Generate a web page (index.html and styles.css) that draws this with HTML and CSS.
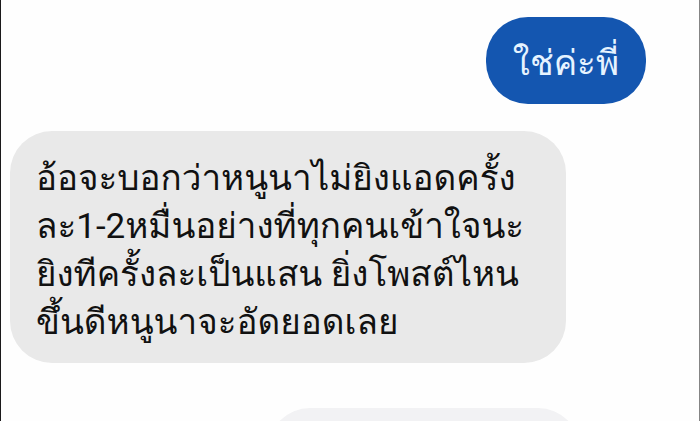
FILE: index.html
```html
<!DOCTYPE html>
<html lang="th">
<head>
<meta charset="utf-8">
<meta name="viewport" content="width=device-width, initial-scale=1">
<title>แชท</title>
<link rel="stylesheet" href="styles.css">
</head>
<body>
<main class="chat">
<p class="bubble sent">ใช่ค่ะพี่</p>
<p class="bubble received">อ้อจะบอกว่าหนูนาไม่ยิงแอดครั้ง<br>ละ1-2หมื่นอย่างที่ทุกคนเข้าใจนะ<br>ยิงทีครั้งละเป็นแสน ยิ่งโพสต์ไหน<br>ขึ้นดีหนูนาจะอัดยอดเลย</p>
<div class="bubble next"></div>
</main>
</body>
</html>
```

FILE: styles.css
```css
* {
  box-sizing: border-box;
}

body {
  margin: 0;
  background: #fefefe;
  color: #111;
  font-family: Roboto, Loma, sans-serif;
}

.chat {
  display: flex;
  flex-direction: column;
  height: 100vh;
  padding: 17px 53px 0 9px;
  border-left: 1px solid #1b191b;
  border-right: 1px solid #858585;
  overflow: hidden;
}

.bubble {
  flex-shrink: 0;
  margin: 0;
  padding: 23px 27px 16px;
  border-radius: 42px;
  font-size: 35px;
  line-height: 48px;
}

.sent {
  align-self: flex-end;
  background: #1456b0;
  color: #e6f3ff;
}

.received {
  align-self: flex-start;
  max-width: 88%;
  margin-top: 27px;
  padding: 24px 42px 16px 26px;
  background: #e9e9e9;
}

.next {
  align-self: flex-end;
  width: 49%;
  height: 88px;
  margin: 45px 66px 0 0;
  background: #f2f2f4;
}
```
